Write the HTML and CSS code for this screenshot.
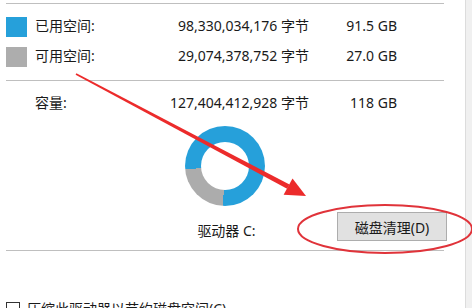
FILE: index.html
```html
<!DOCTYPE html>
<html lang="zh-CN">
<head>
<meta charset="utf-8">
<title>驱动器 C: 属性</title>
<link rel="stylesheet" href="styles.css">
</head>
<body>
<div class="page">
  <main class="panel">
    <hr class="sep sep-top">
    <div class="stats">
      <span class="swatch swatch-used"></span>
      <span class="label">已用空间:</span>
      <span class="bytes">98,330,034,176 字节</span>
      <span class="size">91.5 GB</span>

      <span class="swatch swatch-free"></span>
      <span class="label">可用空间:</span>
      <span class="bytes">29,074,378,752 字节</span>
      <span class="size">27.0 GB</span>
    </div>
    <hr class="sep sep-mid">
    <div class="stats cap">
      <span class="swatch-none"></span>
      <span class="label">容量:</span>
      <span class="bytes">127,404,412,928 字节</span>
      <span class="size">118 GB</span>
    </div>
    <div class="chart-wrap">
      <div class="donut"></div>
    </div>
    <div class="drive-row">
      <span></span>
      <span class="drive-label">驱动器 C:</span>
      <button class="btn" type="button">磁盘清理(D)</button>
    </div>
    <hr class="sep sep-bottom">
    <label class="check-row">
      <span class="checkbox"></span>
      <span class="check-text">压缩此驱动器以节约磁盘空间(C)</span>
    </label>
  </main>
  <aside class="edge"></aside>
</div>
<svg class="annot" width="472" height="308" viewBox="0 0 472 308" aria-hidden="true">
  <polygon points="76.4,73.3 289.5,184.4 287.1,188.8 75.6,74.7" fill="#ec2b2b"/>
  <polygon points="306,196 292.5,178.6 283.6,194.8" fill="#ec2b2b"/>
  <ellipse cx="385" cy="229" rx="87" ry="24" fill="none" stroke="#e0333a" stroke-width="2"/>
</svg>
</body>
</html>
```
FILE: styles.css
```css
html, body {
  margin: 0;
  padding: 0;
  background: #ffffff;
}

body {
  width: 472px;
  height: 308px;
  overflow: hidden;
  position: relative;
  font-family: "Noto Sans", "Noto Sans CJK SC", sans-serif;
  font-size: 14px;
  color: #1a1a1a;
}

.page {
  display: flex;
  height: 308px;
}

.panel {
  width: 465px;
  padding-left: 6px;
  box-sizing: border-box;
}

.edge {
  flex: 1;
  background: #f0f0f0;
  border-left: 1px solid #dcdcdc;
}

.sep {
  width: 438px;
  height: 1px;
  margin: 0;
  border: 0;
  background: #bfbfbf;
}

.sep-top { margin-top: 3px; }
.sep-mid { margin-top: 9px; }
.sep-bottom { margin-top: 9px; }

.stats {
  display: grid;
  grid-template-columns: 29px 130px 144px 88px;
  grid-auto-rows: 30px;
  align-items: center;
  margin-top: 7px;
  line-height: 20px;
}

.stats.cap {
  margin-top: 7px;
}

.swatch {
  width: 21px;
  height: 20px;
  margin-top: 2px;
}

.swatch-used { background: #26a0da; }
.swatch-free { background: #adadad; }

.label {
  white-space: nowrap;
}

.bytes, .size {
  text-align: right;
  white-space: nowrap;
}

.chart-wrap {
  width: 438px;
  display: flex;
  justify-content: center;
  margin-top: 8px;
}

.donut {
  width: 80px;
  height: 80px;
  border-radius: 50%;
  background: conic-gradient(#26a0da 0deg 183deg, #acacac 183deg 265deg, #26a0da 265deg 360deg);
  position: relative;
}

.donut::after {
  content: "";
  position: absolute;
  left: 16px;
  top: 16px;
  width: 48px;
  height: 48px;
  border-radius: 50%;
  background: #ffffff;
}

.drive-row {
  width: 441px;
  display: grid;
  grid-template-columns: 1fr auto 1fr;
  align-items: start;
  margin-top: 6px;
}

.drive-label {
  margin-top: 9px;
  line-height: 20px;
  white-space: nowrap;
}

.btn {
  justify-self: end;
  width: 110px;
  height: 29px;
  padding: 0;
  border: 1px solid #adadad;
  background: #e1e1e1;
  font-family: "Noto Sans", "Noto Sans CJK SC", sans-serif;
  font-size: 14px;
  color: #1a1a1a;
}

.check-row {
  display: flex;
  align-items: center;
  gap: 7px;
  margin-top: 48px;
  line-height: 20px;
}

.checkbox {
  width: 12px;
  height: 12px;
  border: 1px solid #333333;
  background: #ffffff;
  flex: none;
}

.annot {
  position: absolute;
  left: 0;
  top: 0;
  pointer-events: none;
}
```
